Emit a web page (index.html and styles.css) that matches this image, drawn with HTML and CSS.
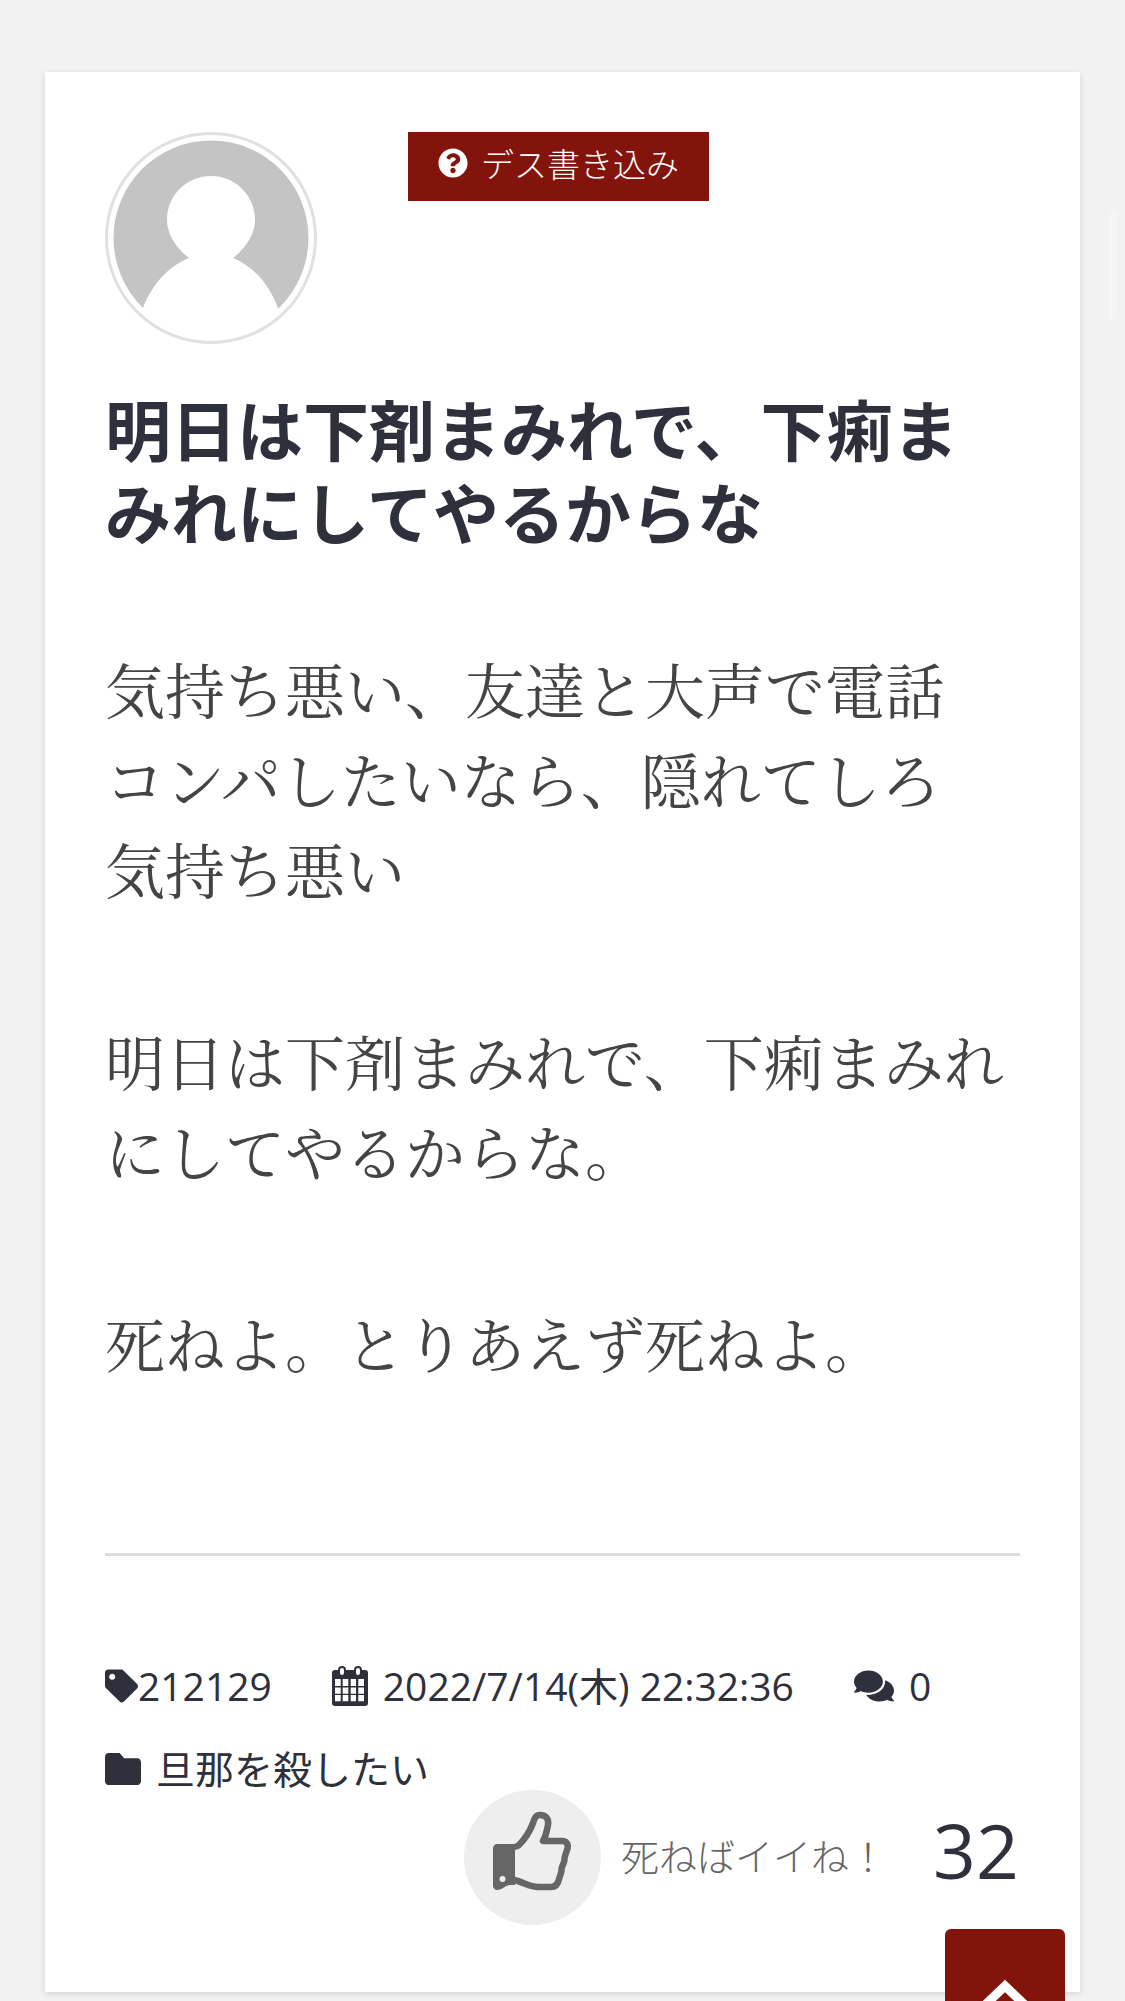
FILE: index.html
```html
<!DOCTYPE html>
<html lang="ja">
<head>
  <meta charset="UTF-8" />
  <title>明日は下剤まみれで、下痢まみれにしてやるからな</title>
  <link rel="stylesheet" href="styles.css">
</head>
<body>
  <div class="post">
    <div class="post-head">
      <svg class="avatar" viewBox="0 0 212 212">
        <clipPath id="av"><circle cx="106" cy="106" r="98.500"/></clipPath>
        <circle cx="106" cy="106" r="104.500" fill="#fff" stroke="#e0e0e0" stroke-width="3"/>
        <circle cx="106" cy="106" r="97.500" fill="#c4c4c4"/>
        <path fill="#fff" clip-path="url(#av)" d="M84 126C71 116 62 102 62 88 62 63 82 44 106 44s44 19 44 44c0 14-9 28-22 38 20 8 36 26 45 50v36H38v-36c9-24 26-42 46-50z"/>
      </svg>
      <div class="badge">
        <svg class="badge-icon" viewBox="0 0 512 512"><path fill="#fff" d="M504 256c0 136.997-111.043 248-248 248S8 392.997 8 256C8 119.083 119.043 8 256 8s248 111.083 248 248zM262.655 90c-54.497 0-89.255 22.957-116.549 63.758-3.536 5.286-2.353 12.415 2.715 16.258l34.699 26.31c5.205 3.947 12.621 3.008 16.665-2.122 17.864-22.658 30.113-35.797 57.303-35.797 20.429 0 45.698 13.148 45.698 32.958 0 14.976-12.363 22.667-32.534 33.976C247.128 238.528 216 254.941 216 296v4c0 6.627 5.373 12 12 12h56c6.627 0 12-5.373 12-12v-1.333c0-28.462 83.186-29.647 83.186-106.667 0-58.002-60.165-102-116.531-102zM256 338c-25.365 0-46 20.635-46 46 0 25.364 20.635 46 46 46s46-20.636 46-46c0-25.365-20.635-46-46-46z"/></svg>
        <span>デス書き込み</span>
      </div>
    </div>

    <h1 class="post-title">明日は下剤まみれで、下痢ま<br>みれにしてやるからな</h1>

    <div class="post-body">
      <p>気持ち悪い、友達と大声で電話<br>コンパしたいなら、隠れてしろ<br>気持ち悪い</p>
      <p>明日は下剤まみれで、下痢まみれ<br>にしてやるからな。</p>
      <p>死ねよ。とりあえず死ねよ。</p>
    </div>

    <hr class="divider">

    <div class="meta">
      <span class="meta-item tag">
        <svg class="icon-tag" viewBox="0 0 512 512"><path d="M0 252.118V48C0 21.49 21.49 0 48 0h204.118a48 48 0 0 1 33.941 14.059l211.882 211.882c18.745 18.745 18.745 49.137 0 67.882L293.823 497.941c-18.745 18.745-49.137 18.745-67.882 0L14.059 286.059A48 48 0 0 1 0 252.118zM112 64c-26.51 0-48 21.49-48 48s21.49 48 48 48 48-21.49 48-48-21.49-48-48-48z"/></svg>212129
      </span>
      <span class="meta-item">
        <svg class="icon-cal" viewBox="0 0 36 40">
          <path d="M3 4h30a3 3 0 0 1 3 3v30a3 3 0 0 1-3 3H3a3 3 0 0 1-3-3V7a3 3 0 0 1 3-3z"/>
          <rect x="7" y="1" width="6" height="9" rx="3" fill="#fff" stroke="#2e303b" stroke-width="2"/>
          <rect x="23" y="1" width="6" height="9" rx="3" fill="#fff" stroke="#2e303b" stroke-width="2"/>
          <path fill="#fff" d="M3 13h5.700v7H3zM10.700 13h5.600v7h-5.600zM18.700 13h5.300v7h-5.300zM26.300 13H32v7h-5.700zM3 21.500h5.700v6.200H3zM10.700 21.500h5.600v6.200h-5.600zM18.700 21.500h5.300v6.200h-5.300zM26.300 21.500H32v6.200h-5.700zM3 29h5.700v6.300H3zM10.700 29h5.600v6.300h-5.600zM18.700 29h5.300v6.300h-5.300zM26.300 29H32v6.300h-5.700z"/>
        </svg>
        2022/7/14(木) 22:32:36
      </span>
      <span class="meta-item">
        <svg class="icon-com" viewBox="0 0 576 512"><path d="M416 192c0-88.400-93.100-160-208-160S0 103.600 0 192c0 34.300 14.100 65.900 38 92-13.400 30.200-35.500 54.200-35.800 54.500-2.200 2.300-2.800 5.700-1.500 8.700S4.800 352 8 352c36.600 0 66.900-12.300 88.700-25 32.200 15.700 70.300 25 111.300 25 114.900 0 208-71.600 208-160zm122 220c23.900-26 38-57.700 38-92 0-66.900-53.500-124.200-129.300-148.100.9 6.600 1.300 13.300 1.300 20.100 0 105.900-107.700 192-240 192-10.800 0-21.300-.8-31.700-1.900C207.800 439.600 281.800 480 368 480c41 0 79.100-9.200 111.300-25 21.800 12.700 52.100 25 88.700 25 3.200 0 6.100-1.900 7.300-4.800 1.300-2.900.7-6.300-1.500-8.700-.3-.3-22.400-24.200-35.800-54.500z"/></svg>
        0
      </span>
      <span class="meta-item">
        <svg class="icon-folder" viewBox="0 64 512 384" preserveAspectRatio="none"><path d="M464 128H272l-64-64H48C21.490 64 0 85.490 0 112v288c0 26.510 21.490 48 48 48h416c26.510 0 48-21.490 48-48V176c0-26.510-21.490-48-48-48z"/></svg>
        旦那を殺したい
      </span>
    </div>

    <div class="like">
      <div class="like-btn">
        <svg class="icon-thumb" viewBox="-6 -5 137 135">
          <path fill="#666" d="M27 49h18v41l-5 0c-4 0-8 5-13 5-2 0-4-2-4-4V53c0-2 2-4 4-4z"/>
          <path fill="none" stroke="#666" stroke-width="6.500" stroke-linejoin="round" d="M44 52c2 0 4-1 5-2 6-6 11-14 14-22 2-6 3-8 7-8 6 0 9 4 8 10-1 5-2 11-5 16h19c5 0 7 4 5 9l-2 6c-1 2 0 4-1 6l-2 5c-1 2 0 4-1 6l-2 6c-1 5-3 8-8 8H68c-8 0-15-5-24-7"/>
          <circle cx="32.500" cy="84" r="3" fill="#eee"/>
        </svg>
      </div>
      <span class="like-label">死ねばイイね！</span>
      <span class="like-count">32</span>
    </div>
  </div>

  <div class="scroll-thumb"></div>
  <a class="to-top" href="#">
    <svg viewBox="0 0 50 30"><path fill="none" stroke="#fff" stroke-width="9" d="M4 27 25 7l21 20"/></svg>
  </a>
</body>
</html>
```

FILE: styles.css
```css
html, body {
  margin: 0;
  height: 2001px;
  overflow: hidden;
}

body {
  background: #f2f2f2;
  color: #2e303b;
  font-family: "Open Sans", "Noto Sans CJK JP", sans-serif;
  padding-top: 72px;
  box-sizing: border-box;
}

.post {
  position: relative;
  background: #fff;
  margin: 0 45px;
  padding: 60px;
  height: 1920px;
  box-sizing: border-box;
  box-shadow: 0 2px 6px rgba(0,0,0,0.12);
}

.post-head {
  display: flex;
  align-items: flex-start;
}

.avatar {
  width: 212px;
  height: 212px;
  flex: none;
}

.badge {
  display: flex;
  align-items: center;
  gap: 13px;
  height: 69px;
  width: 301px;
  margin-left: 91px;
  padding: 0 0 8px 30px;
  box-sizing: border-box;
  background: #83140c;
  color: #fff;
  font-size: 33px;
  font-weight: 300;
}

.badge-icon {
  width: 30px;
  height: 30px;
}

.post-title {
  margin: 45px 0 0;
  font-size: 66px;
  line-height: 83px;
  font-weight: 700;
}

.post-body {
  margin-top: 88px;
  font-family: "Noto Serif CJK JP", "Liberation Serif", "Noto Sans CJK JP", serif;
  font-size: 60px;
  line-height: 90px;
  color: #444;
}

.post-body p {
  margin: 0 0 102px;
}

.divider {
  border: none;
  border-top: 3px solid #ddd;
  margin: 166px 0 0;
}

.meta {
  display: flex;
  flex-wrap: wrap;
  column-gap: 60px;
  row-gap: 28px;
  margin-top: 102px;
  font-size: 39px;
  line-height: 55px;
}

.meta-item {
  display: flex;
  align-items: center;
  gap: 15px;
  white-space: nowrap;
}

.meta-item.tag {
  gap: 0;
}

.meta svg {
  fill: #2e303b;
  flex: none;
}

.icon-tag {
  width: 33px;
  height: 34px;
}

.icon-cal {
  width: 36px;
  height: 40px;
}

.icon-com {
  width: 40px;
  height: 36px;
}

.icon-folder {
  width: 36px;
  height: 32px;
}

.like {
  position: absolute;
  left: 419px;
  top: 1718px;
  display: flex;
  align-items: center;
}

.like-btn {
  width: 137px;
  height: 135px;
  border-radius: 50%;
  background: #eee;
}

.icon-thumb {
  display: block;
  width: 137px;
  height: 135px;
}

.like-label {
  margin: -6px 0 0 20px;
  font-size: 38px;
  font-weight: 300;
  color: #666;
}

.like-count {
  margin: -16px 0 0 46px;
  font-size: 75px;
}

.to-top {
  position: fixed;
  left: 945px;
  top: 1929px;
  width: 120px;
  height: 90px;
  background: #83140c;
  border-radius: 6px;
  display: flex;
  justify-content: center;
  align-items: flex-start;
}

.to-top svg {
  width: 50px;
  height: 30px;
  margin-top: 50px;
}

.scroll-thumb {
  position: fixed;
  right: 8px;
  top: 210px;
  width: 8px;
  height: 110px;
  border-radius: 4px;
  background: #f5f5f5;
}
```
